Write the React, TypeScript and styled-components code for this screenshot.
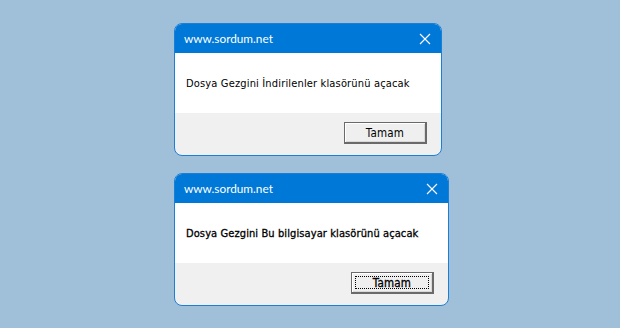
import React from "react";
import styled, { createGlobalStyle } from "styled-components";

const Global = createGlobalStyle`
  html, body { margin: 0; padding: 0; }
  body { background: #a0bfd9; width: 620px; height: 328px; overflow: hidden; }
`;

const Page = styled.div`
  width: 620px;
  height: 328px;
  box-sizing: border-box;
  padding: 23px 0 0 174px;
  display: flex;
  flex-direction: column;
  align-items: flex-start;
  gap: 17px;
`;

const Dialog = styled.div<{ $w: number }>`
  width: ${(p) => p.$w}px;
  box-sizing: border-box;
  border: 1px solid #1c7fd6;
  border-radius: 8px;
  overflow: hidden;
  background: #f0f0f0;
  display: flex;
  flex-direction: column;
`;

const TitleBar = styled.div`
  height: 29px;
  background: #0078d7;
  display: flex;
  align-items: center;
  justify-content: space-between;
  padding: 0 10px 0 9px;
  color: #fff;
  font-family: Lato, "Noto Sans", sans-serif;
  font-size: 11.8px;
`;

const Close = styled.svg`
  width: 12px;
  height: 12px;
  display: block;
`;

const Body = styled.div<{ $heavy?: boolean }>`
  height: 60px;
  background: #fff;
  display: flex;
  align-items: center;
  padding-left: 11px;
  font-family: "DejaVu Sans Condensed", "DejaVu Sans", sans-serif;
  font-size: 11px;
  letter-spacing: ${(p) => (p.$heavy ? "0.1px" : "0.16px")};
  color: #000;
  -webkit-text-stroke: ${(p) => (p.$heavy ? "0.3px #000" : "0")};
`;

const Footer = styled.div`
  height: 42px;
  box-sizing: border-box;
  padding: 9px 14px 0 0;
  display: flex;
  justify-content: flex-end;
  align-items: flex-start;
`;

const Button = styled.button<{ $focus?: boolean }>`
  width: 83px;
  height: 22px;
  box-sizing: border-box;
  background: #efefef;
  border-style: solid;
  border-color: #6a6a6a;
  border-width: 1px 2px 2px 1px;
  box-shadow: inset 1px 1px 0 #ffffff, inset -1px -1px 0 #d9d9d9;
  padding: 0;
  position: relative;
  font-family: "DejaVu Sans Condensed", "DejaVu Sans", sans-serif;
  font-size: 11.5px;
  letter-spacing: 0.2px;
  color: #000;
  -webkit-text-stroke: ${(p) => (p.$focus ? "0.3px #000" : "0")};
  display: flex;
  align-items: center;
  justify-content: center;
`;

const FocusRing = styled.span`
  position: absolute;
  inset: 3px;
  border: 1px dotted #000;
  pointer-events: none;
`;

function MsgBox({ text, width, heavy }: { text: string; width: number; heavy?: boolean }) {
  return (
    <Dialog $w={width}>
      <TitleBar>
        <span>www.sordum.net</span>
        <Close viewBox="0 0 12 12">
          <path d="M1 1 L11 11 M11 1 L1 11" stroke="#fff" strokeWidth="1.1" fill="none" />
        </Close>
      </TitleBar>
      <Body $heavy={heavy}>{text}</Body>
      <Footer>
        <Button $focus={heavy}>
          {heavy && <FocusRing />}
          Tamam
        </Button>
      </Footer>
    </Dialog>
  );
}

export default function App() {
  return (
    <>
      <Global />
      <Page>
        <MsgBox text="Dosya Gezgini İndirilenler klasörünü açacak" width={268} />
        <MsgBox text="Dosya Gezgini Bu bilgisayar klasörünü açacak" width={275} heavy />
      </Page>
    </>
  );
}
